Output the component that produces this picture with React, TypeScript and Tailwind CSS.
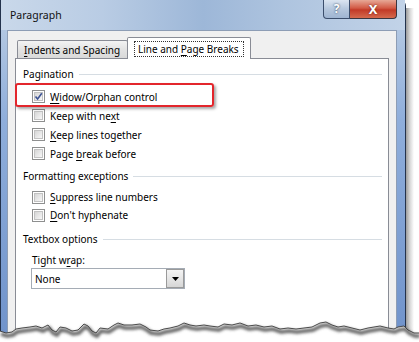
import React from "react";

const jag: [number, number][] = [
  [0, 20], [6, 22], [12, 21], [16, 18], [22, 17], [30, 16], [36, 15], [42, 17], [48, 14],
  [52, 19], [56, 21], [60, 16], [66, 17], [72, 20], [78, 19], [84, 13], [88, 15], [92, 20],
  [96, 22], [100, 17], [108, 18], [114, 14], [118, 12], [124, 14], [132, 14], [140, 13],
  [146, 16], [150, 19], [158, 20], [164, 18], [170, 17], [178, 15], [184, 12], [190, 14],
  [196, 15], [204, 14], [210, 15], [218, 16], [224, 13], [232, 14], [240, 12], [248, 15],
  [256, 14], [264, 16], [272, 15], [280, 18], [288, 17], [296, 18], [304, 17], [312, 16],
  [320, 12], [326, 11], [332, 14], [338, 16], [344, 15], [352, 17], [360, 19], [368, 17],
  [374, 16], [380, 15], [388, 17], [394, 18], [398, 16], [404, 15], [408, 19], [414, 22],
  [419, 22],
];

function Checkbox({ checked }: { checked?: boolean }) {
  return (
    <div className="flex h-[13px] w-[13px] shrink-0 items-center justify-center border border-[#8e8f8f] bg-white">
      <div className="relative h-[9px] w-[9px] border border-[#c2c2c2] bg-[linear-gradient(135deg,#d6d6d6,#f7f7f7)]">
        {checked && (
          <svg viewBox="0 0 9 9" className="absolute left-[-1px] top-[-1px] h-[9px] w-[9px]">
            <path d="M1.5 4.5 L3.6 7 L7.8 1.2" fill="none" stroke="#3d5393" strokeWidth="1.6" />
          </svg>
        )}
      </div>
    </div>
  );
}

function GroupHeader({ children }: { children: React.ReactNode }) {
  return (
    <div className="flex h-[16px] items-center pl-[7px] pr-[6px]">
      <span className="whitespace-nowrap">{children}</span>
      <div className="ml-[5px] h-px flex-1 bg-[#d6dde3]" />
    </div>
  );
}

function Row({ checked, h, children }: { checked?: boolean; h: string; children: React.ReactNode }) {
  return (
    <div className={`flex items-center gap-[5px] pl-[16px] ${h}`}>
      <Checkbox checked={checked} />
      <span className="whitespace-nowrap">{children}</span>
    </div>
  );
}

const U = ({ children }: { children: React.ReactNode }) => (
  <span className="underline underline-offset-[2px]">{children}</span>
);

function TornEdge() {
  const pts = jag.map(([x, y]) => `${x},${y}`).join(" ");
  return (
    <svg className="absolute left-0 top-[311px]" width="419" height="31" viewBox="0 0 419 31">
      <defs>
        <filter id="blur" x="-5%" y="-50%" width="110%" height="200%">
          <feGaussianBlur stdDeviation="1.5" />
        </filter>
      </defs>
      <polygon points={`${pts} 419,31 0,31`} fill="#ffffff" />
      <polyline points={pts} fill="none" stroke="#5e5e5e" strokeWidth="3.5" filter="url(#blur)" transform="translate(1,3)" />
      <polyline points={pts} fill="none" stroke="#3a3a3a" strokeWidth="0.9" />
    </svg>
  );
}

export default function App() {
  return (
    <div className="relative h-[342px] w-[419px] overflow-hidden bg-white font-['Noto_Sans',sans-serif] text-[10px] leading-none text-black">
      <div className="flex">
        <div className="flex h-[336px] w-[406px] flex-col rounded-tr-[6px] border-x border-[#23324c] bg-[linear-gradient(180deg,#c4d5ea_0px,#b2c7e2_30px,#8faedb_120px,#7093cb_100%)]">
          {/* title bar */}
          <div className="flex h-[30px] shrink-0 items-start bg-[linear-gradient(90deg,#c9d8ea_0%,#b9cce4_25%,#9db7d8_50%,#aec4df_70%,#c2d3e8_100%)] pr-[8px]">
            <span className="pl-[9px] pt-[10px] text-[10.5px] text-[#111]">Paragraph</span>
            <div className="ml-auto flex h-[19px]">
              <div className="flex w-[27px] items-center justify-center rounded-bl-[4px] border border-t-0 border-[#3b4e6c] bg-[linear-gradient(180deg,#dbe5f1,#b5c7dd_50%,#9fb5d2)] text-[12px] font-bold text-white [text-shadow:0_0_2px_#1f2f48]">
                ?
              </div>
              <div className="flex w-[47px] items-center justify-center rounded-br-[4px] border border-l-0 border-t-0 border-[#3b3640] bg-[linear-gradient(180deg,#e7a896,#d25a45_45%,#c23a27_55%,#d56a4e)] text-[13px] font-bold text-white [text-shadow:0_0_2px_#5a1a10]">
                X
              </div>
            </div>
          </div>

          {/* client area */}
          <div className="ml-[6px] mr-[8px] flex flex-1 flex-col border border-b-0 border-[#8d9db5] bg-[#f0f0f0] px-[7px] pt-[6px]">
            <div className="flex items-end pl-[2px]">
              <div className="flex h-[18px] w-[111px] items-center rounded-t-[2px] border border-b-0 border-[#898c95] bg-[linear-gradient(180deg,#f3f3f3,#e3e3e3_50%,#d9d9d9)] pl-[6px]">
                <span className="whitespace-nowrap"><U>I</U>ndents and Spacing</span>
              </div>
              <div className="relative z-10 -mb-px -ml-px flex h-[22px] w-[124px] items-start rounded-t-[2px] border border-b-0 border-[#898c95] bg-white px-[6px] pt-[3px]">
                <div className="flex h-[16px] w-full items-center border border-dotted border-[#333] pl-[3px]">
                  <span className="whitespace-nowrap">Line and <U>P</U>age Breaks</span>
                </div>
              </div>
            </div>

            <div className="relative flex flex-1 flex-col border border-[#898c95] bg-white pt-[7px]">
              <GroupHeader>Pagination</GroupHeader>
              <div className="mt-[5px] flex flex-col">
                <Row checked h="h-[19px]"><U>W</U>idow/Orphan control</Row>
                <Row h="h-[19px]">Keep with ne<U>x</U>t</Row>
                <Row h="h-[19px]"><U>K</U>eep lines together</Row>
                <Row h="h-[19px]">Page <U>b</U>reak before</Row>
              </div>

              <div className="mt-[5px]">
                <GroupHeader>Formatting exceptions</GroupHeader>
              </div>
              <div className="mt-[4px] flex flex-col">
                <Row h="h-[18px]"><U>S</U>uppress line numbers</Row>
                <Row h="h-[18px]"><U>D</U>on't hyphenate</Row>
              </div>

              <div className="mt-[7px]">
                <GroupHeader>Textbox options</GroupHeader>
              </div>
              <div className="mt-[5px] flex h-[16px] items-center pl-[16px]">
                <span>Tight w<U>r</U>ap:</span>
              </div>
              <div className="ml-[15px] flex h-[21px] w-[154px] items-center border border-[#a5acb5] bg-white">
                <span className="flex-1 pl-[3px]">None</span>
                <div className="flex h-[19px] w-[18px] items-center justify-center border border-[#9a9a9a] bg-[linear-gradient(180deg,#f4f4f4,#e6e6e6_50%,#d6d6d6)]">
                  <svg width="7" height="4" viewBox="0 0 7 4">
                    <path d="M0 0 H7 L3.5 4 Z" fill="#000" />
                  </svg>
                </div>
              </div>

              {/* highlight box */}
              <div className="absolute left-[-1px] top-[24px] h-[24px] w-[199px] rounded-[3px] border-2 border-[#e3262c] shadow-[2px_2px_3px_rgba(0,0,0,0.35)]" />
            </div>
          </div>
        </div>
        <div className="mt-[8px] h-[328px] w-[8px] bg-[linear-gradient(90deg,#9c9c9c,#d8d8d8_50%,#ffffff)]" />
      </div>
      <TornEdge />
    </div>
  );
}
